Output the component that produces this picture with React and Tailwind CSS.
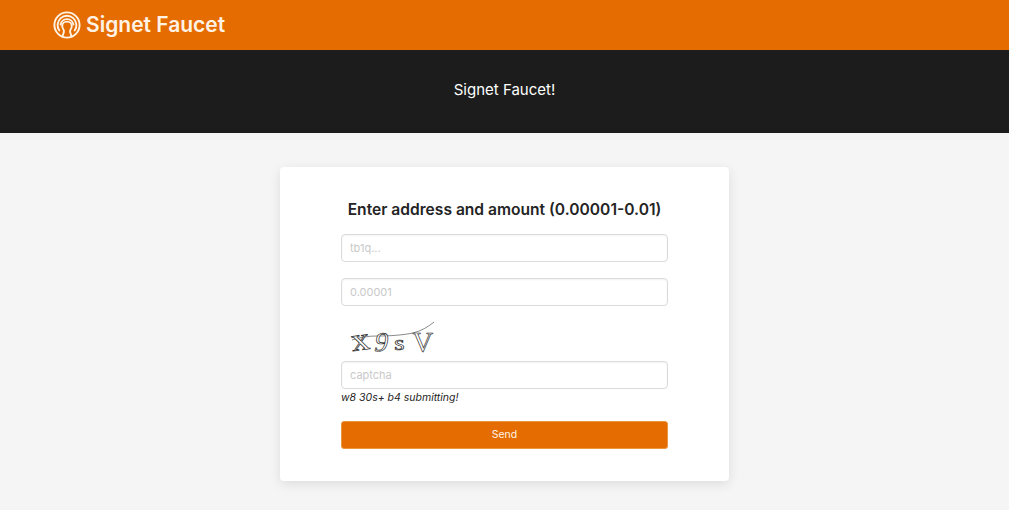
import React from 'react';

const Logo = () => (
  <svg width="28" height="28" viewBox="0 0 28 28" fill="none" stroke="#fff3e6" strokeLinecap="round" strokeWidth="1.900">
    <circle cx="14" cy="14" r="12.600" />
    <path d="M6.300 19.500A9.400 9.400 0 1 1 21.700 19.500" />
    <path d="M7.600 13.500A6.500 6.500 0 0 1 20.400 13.500" />
    <path d="M9.300 25.500C10.500 22.500 11.500 21 10.800 19.200 9.800 17.800 9.200 16.500 9.200 15 9.200 12.500 11.300 10.600 14 10.600s4.800 1.900 4.800 4.400c0 1.500-.6 2.800-1.600 4.200-.7 1.800.3 3.300 1.500 6.300" />
  </svg>
);

const Captcha = () => (
  <div className="relative h-[55px] w-[100px] overflow-hidden font-['Liberation_Serif',serif] text-[#fff] [-webkit-text-stroke:0.7px_#2a2a2a]">
    <svg className="absolute left-0 top-0" width="100" height="55" viewBox="0 0 100 55" fill="none" stroke="#555" strokeWidth="0.7">
      <path d="M11 34C20 31 28 30 36 30 50 30 62 29 72 27 80 25 87 21 93 16" />
    </svg>
    <span className="absolute left-[11px] top-[17px] text-[32px] leading-none [transform:rotate(-8deg)_scaleX(1.150)]">x</span>
    <span className="absolute left-[34px] top-[23px] text-[27px] leading-none [transform:skewX(-10deg)]">9</span>
    <span className="absolute left-[54px] top-[26px] text-[22px] leading-none [transform:scaleX(1.200)]">s</span>
    <span className="absolute left-[71px] top-[21px] text-[30px] leading-none [transform:scaleX(0.950)]">V</span>
  </div>
);

const inputClass = "block w-full h-[28px] rounded-[4px] border border-[#dbdbdb] bg-white px-[8px] text-[11px] text-[#363636] shadow-[inset_0_1px_2px_rgba(10,10,10,0.05)] placeholder:text-[#c9c9c9] outline-none";

export default function App() {
  return (
    <div className="min-h-[510px] bg-[#f5f5f5] font-['Inter',sans-serif]">
      <header className="flex h-[50px] items-center gap-[5px] bg-[#e56c00] pl-[53px]">
        <Logo />
        <span className="text-[21px] font-semibold text-[#fff3e6]">Signet Faucet</span>
      </header>

      <section className="flex h-[83px] items-center justify-center bg-[#1c1c1c] pb-[3px]">
        <h1 className="text-[15px] text-white">Signet Faucet!</h1>
      </section>

      <main className="flex justify-center pt-[34px]">
        <form className="h-[314px] w-[449px] rounded-[4px] bg-white px-[61px] pt-[32px] shadow-[0_3px_12px_rgba(10,10,10,0.1)]">
          <h2 className="mb-[14px] text-center text-[15.600px] font-semibold leading-[21px] text-[#242424]">
            Enter address and amount (0.00001-0.01)
          </h2>
          <div className="flex flex-col gap-[16px]">
            <input className={inputClass} placeholder="tb1q..." />
            <input className={inputClass} placeholder="0.00001" />
          </div>
          <Captcha />
          <input className={inputClass} placeholder="captcha" />
          <p className="mt-[1px] text-[10.500px] italic leading-[15px] text-[#242424]">w8 30s+ b4 submitting!</p>
          <button type="button" className="mt-[16px] h-[28px] w-full rounded-[3px] border border-[#e9963f] bg-[#e56c00] text-[10.500px] text-[#fff3e6]">
            Send
          </button>
        </form>
      </main>
    </div>
  );
}
